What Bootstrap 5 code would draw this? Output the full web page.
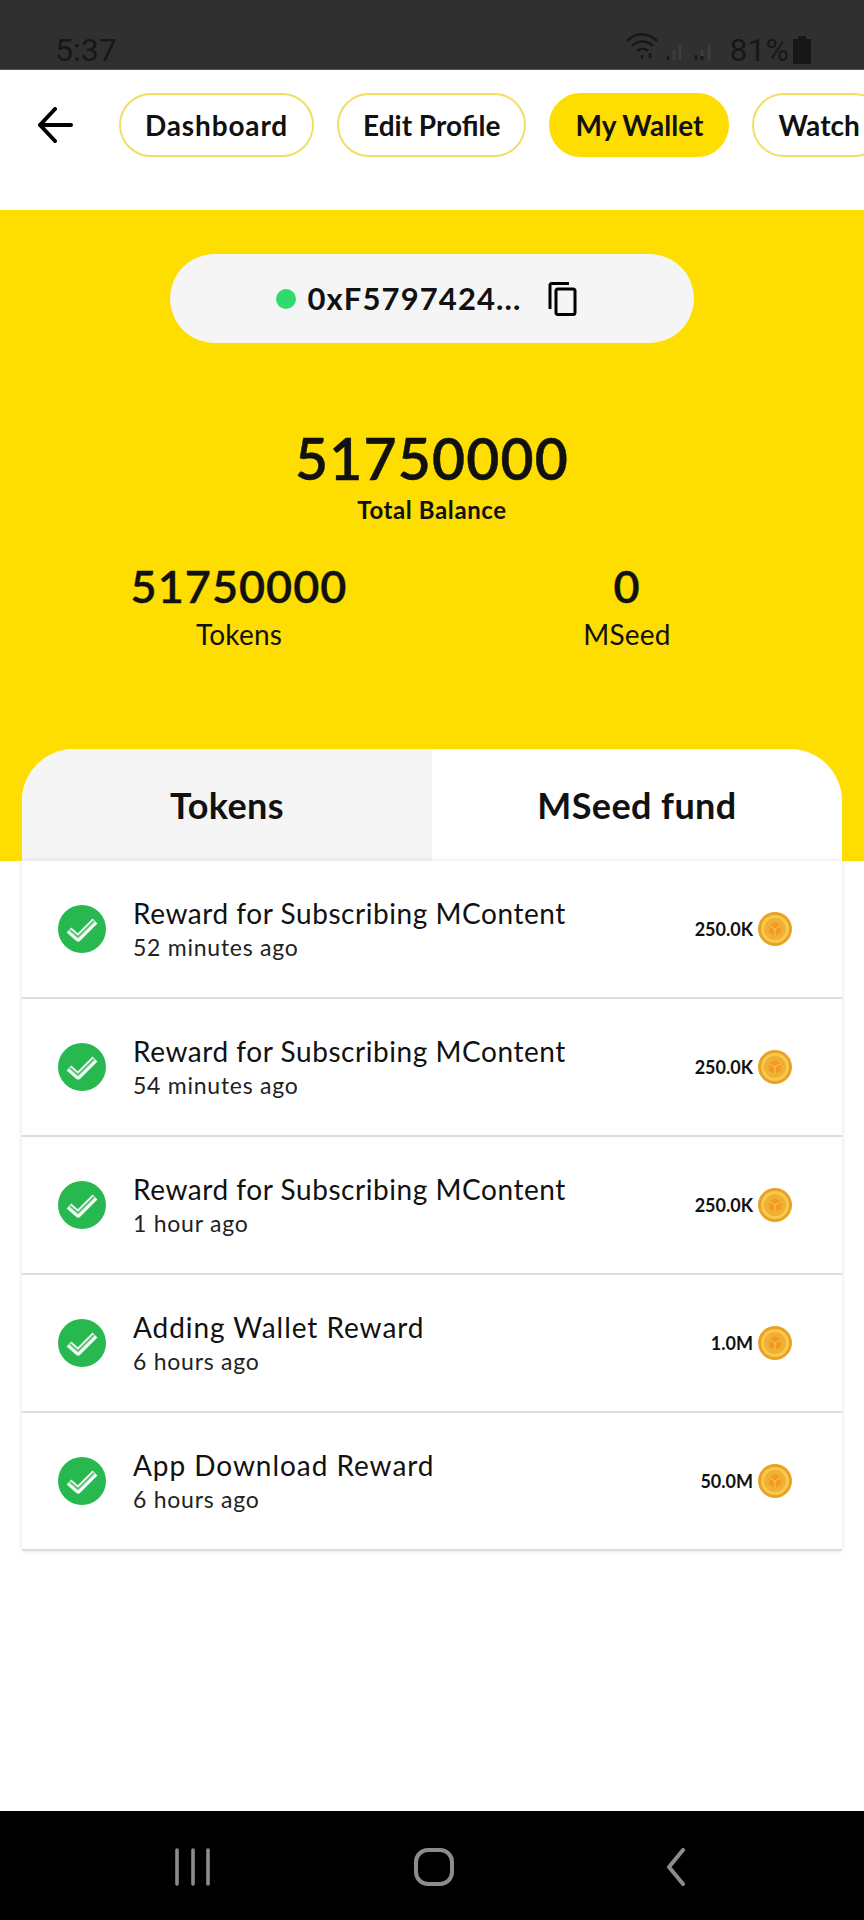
<!DOCTYPE html>
<html lang="en">
<head>
    <meta charset="UTF-8">
    <meta name="viewport" content="width=device-width, initial-scale=1.0">
    <title>My Wallet</title>
    <link rel="stylesheet" href="https://cdn.jsdelivr.net/npm/bootstrap@5.3.0/dist/css/bootstrap.min.css">
    <style>
        html, body { margin: 0; background: #fff; }
        body { font-family: "Lato", "Noto Sans", sans-serif; color: #111; }
        .screen { width: 864px; height: 1920px; overflow: hidden; }
        .status-bar { height: 70px; background: #303030; color: #171717; padding: 32px 53px 0 55px; font-family: "Roboto", sans-serif; font-size: 32px; line-height: 36px; border-bottom: 1px solid #555; }
        .status-right { gap: 4px; }
        .top-nav { height: 140px; padding: 23px 0 0 37px; }
        .back-btn { width: 36px; margin-right: 46px; padding-top: 14px; }
        .pill-link { height: 64px; padding: 0 24px; border: 2px solid #f0df63; border-radius: 32px; font-size: 28px; font-weight: 700; line-height: 60px; white-space: nowrap; margin-right: 23px; }
        .pill-link.wide-text { letter-spacing: .85px; }
        .pill-link.active { background: #fedd00; border-color: #fedd00; }
        .hero { height: 651px; background: #fedd00; padding-top: 44px; }
        .address-pill { width: 524px; height: 89px; margin: 0 auto 80px; padding-right: 11px; background: #f5f5f5; border-radius: 45px; font-size: 31px; font-weight: 700; letter-spacing: 1.1px; }
        .dot { width: 20px; height: 20px; background: #2fdc6b; border-radius: 50%; margin-right: 12px; }
        .copy-icon { margin-left: 26px; }
        .total-num { font-size: 57px; font-weight: 600; line-height: 70px; letter-spacing: 1.2px; -webkit-text-stroke: .5px #111; }
        .total-label { font-size: 24px; font-weight: 700; line-height: 34px; letter-spacing: .6px; }
        .bal-row { margin: 30px 0 0 45px; height: 140px; }
        .bal-col { width: 388px; }
        .bal-num { font-size: 45px; font-weight: 600; line-height: 58px; letter-spacing: 1px; -webkit-text-stroke: .4px #111; }
        .bal-label { font-size: 28px; line-height: 38px; letter-spacing: .2px; }
        .tabs-box { margin: 52px 22px 0; height: 112px; border-radius: 52px 52px 0 0; overflow: hidden; background: #fff; }
        .tab-item { width: 50%; font-size: 36px; font-weight: 700; line-height: 112px; text-align: center; letter-spacing: .4px; }
        .tab-item.off { background: #f5f5f5; }
        .reward-list { margin: 0 22px; box-shadow: 0 0 5px rgba(0,0,0,.12); }
        .reward-row { height: 138px; padding: 0 50px 0 36px; border-bottom: 2px solid #dcdcdc; background: #fff; }
        .check-badge { width: 48px; height: 48px; margin-right: 27px; }
        .reward-title { font-size: 28px; line-height: 34px; letter-spacing: .55px; margin-top: 2px; }
        .reward-title.loose { letter-spacing: .95px; }
        .reward-time { font-size: 23px; line-height: 35px; color: #222; letter-spacing: .75px; }
        .reward-amount { font-size: 18px; font-weight: 700; margin-right: 5px; }
        .spacer-area { flex: 1; }
        .soft-keys { height: 109px; background: #000; padding: 37px 0 0 3px; gap: 201px; }
    </style>
</head>
<body>
<div class="screen d-flex flex-column">
    <div class="status-bar d-flex justify-content-between">
        <span>5:37</span>
        <div class="status-right d-flex align-items-start">
            <svg width="100" height="30" viewBox="0 0 100 30" fill="none" stroke="#171717" stroke-width="2.500">
                <path d="M1 9c9-9 21-9 30 0M6 14c6-6 15-6 21 0M11 19c3-3 8-3 11 0"/>
                <path d="M16 23v4M24 21v5" />
                <path d="M42 28v-4M48 28v-10M54 28v-14M70 28v-5M76 28v-10M83 28v-15" stroke="#3f3f3f"/>
                <path d="M42 28v-4M70 28v-5M76 28v-4" />
            </svg>
            <span>81%</span>
            <svg width="18" height="28" viewBox="0 0 18 28" class="mt-1"><path fill="#171717" d="M5 0h8v3h5v25H0V3h5z"/></svg>
        </div>
    </div>

    <div class="top-nav d-flex overflow-hidden">
        <div class="back-btn flex-shrink-0">
            <svg width="36" height="36" viewBox="0 0 36 36" fill="none" stroke="#000" stroke-width="4" stroke-linecap="round" stroke-linejoin="round"><path d="M34 18H3M18 2 3 18l15 16"/></svg>
        </div>
        <div class="pill-link wide-text">Dashboard</div>
        <div class="pill-link">Edit Profile</div>
        <div class="pill-link active">My Wallet</div>
        <div class="pill-link">Watch</div>
    </div>

    <div class="hero text-center">
        <div class="address-pill d-flex align-items-center justify-content-center">
            <span class="dot"></span>
            <span>0xF5797424...</span>
            <svg class="copy-icon" width="30" height="34" viewBox="0 0 30 34" fill="none" stroke="#000" stroke-width="3" stroke-linejoin="round"><path d="M3 27V3a1.500 1.500 0 0 1 1.500-1.500H22"/><rect x="9" y="7" width="19" height="25.500" rx="2"/></svg>
        </div>
        <div class="total-num">51750000</div>
        <div class="total-label">Total Balance</div>
        <div class="bal-row d-flex">
            <div class="bal-col">
                <div class="bal-num">51750000</div>
                <div class="bal-label">Tokens</div>
            </div>
            <div class="bal-col">
                <div class="bal-num">0</div>
                <div class="bal-label">MSeed</div>
            </div>
        </div>
        <div class="tabs-box d-flex">
            <div class="tab-item off">Tokens</div>
            <div class="tab-item">MSeed fund</div>
        </div>
    </div>

    <div class="reward-list" id="rewardList"></div>
    <div class="spacer-area"></div>

    <div class="soft-keys d-flex justify-content-center">
        <svg width="40" height="38" viewBox="0 0 40 38" fill="none" stroke="#8c8c8c" stroke-width="3.600" stroke-linecap="round"><path d="M4 2v34M20 2v34M35 2v34"/></svg>
        <svg width="40" height="38" viewBox="0 0 40 38" fill="none" stroke="#8c8c8c" stroke-width="4"><rect x="2" y="2" width="36" height="34" rx="12"/></svg>
        <svg width="40" height="38" viewBox="0 0 40 38" fill="none" stroke="#8c8c8c" stroke-width="4" stroke-linecap="round" stroke-linejoin="round"><path d="M28 2 14 19l14 17"/></svg>
    </div>
</div>

<script>
    const rewards = [
        ["Reward for Subscribing MContent", "52 minutes ago", "250.0K", ""],
        ["Reward for Subscribing MContent", "54 minutes ago", "250.0K", ""],
        ["Reward for Subscribing MContent", "1 hour ago", "250.0K", ""],
        ["Adding Wallet Reward", "6 hours ago", "1.0M", "loose"],
        ["App Download Reward", "6 hours ago", "50.0M", "loose"]
    ];
    const checkSvg = `<svg class="check-badge flex-shrink-0" viewBox="0 0 48 48"><circle cx="24" cy="24" r="24" fill="#27b84f"/><path d="M11 25l9 8 17-17" fill="none" stroke="#f1faf3" stroke-width="7" stroke-linejoin="round"/><path d="M12 25l8 7 16-16" fill="none" stroke="#59c47a" stroke-width="2"/></svg>`;
    const coinSvg = `<svg width="34" height="34" viewBox="0 0 34 34" class="flex-shrink-0"><circle cx="17" cy="17" r="17" fill="#e9a224"/><circle cx="17" cy="17" r="14" fill="#f9ca4f"/><circle cx="17" cy="17" r="11" fill="#efb033"/><path d="M17 10l6 3.500v7L17 24l-6-3.500v-7z" fill="#f39a22"/><path d="M11 13.500l6 3.500 6-3.500M17 17v7" fill="none" stroke="#fbc95a" stroke-width="1"/></svg>`;
    document.getElementById("rewardList").innerHTML = rewards.map(r => `
        <div class="reward-row d-flex align-items-center">
            ${checkSvg}
            <div class="flex-grow-1">
                <div class="reward-title ${r[3]}">${r[0]}</div>
                <div class="reward-time">${r[1]}</div>
            </div>
            <span class="reward-amount">${r[2]}</span>
            ${coinSvg}
        </div>`).join("");
</script>
</body>
</html>
